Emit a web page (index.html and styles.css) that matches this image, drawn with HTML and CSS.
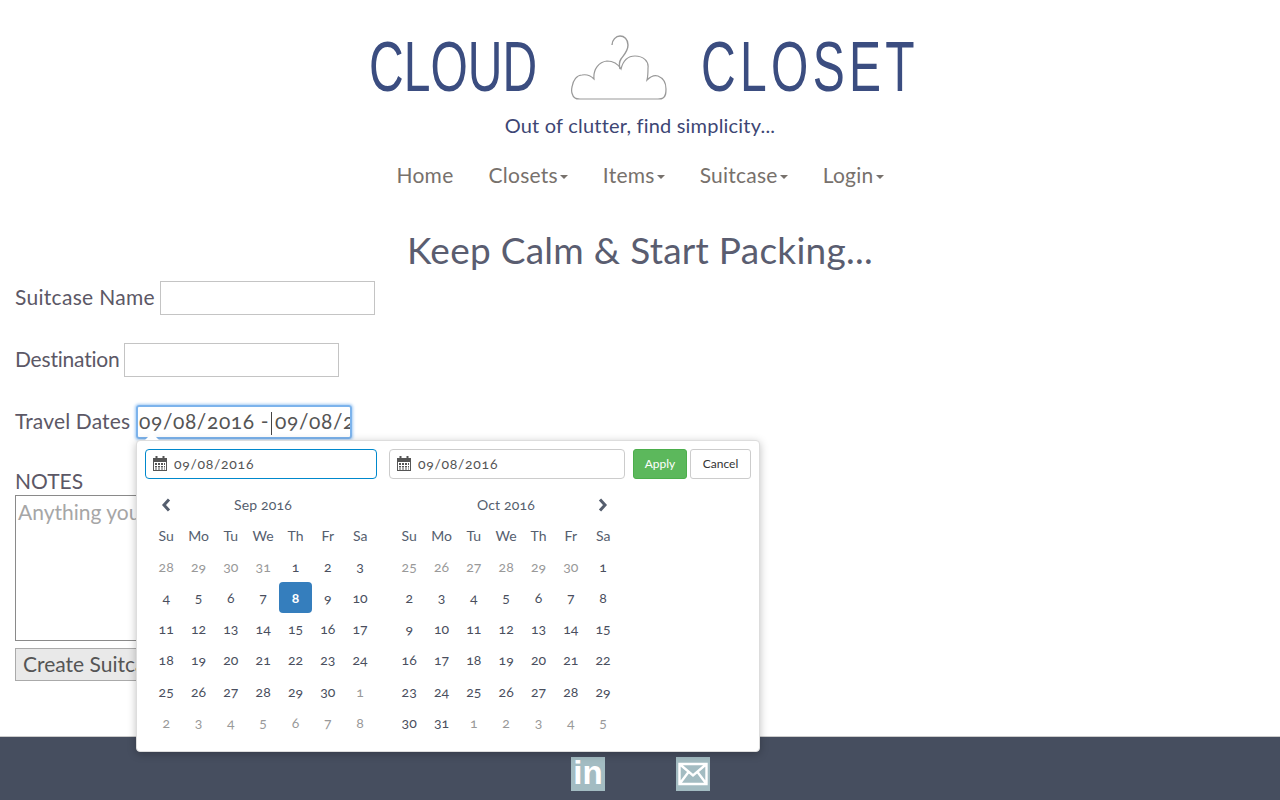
FILE: index.html
```html
<!DOCTYPE html>
<html>
<head>
    <link rel="stylesheet" href="styles.css">
</head>
<body>
    <header class="site-header">
        <div class="logo">
            <span class="logo-word cloud">CLOUD</span>
            <svg class="logo-icon" width="96" height="65" viewBox="-1 -1 96 65">
                <path d="M3 62 C0 60 -1 55 0 51 C1 44 5 39 10 39 C15 38 19 40 22 43 C21 33 27 26 35 25 C41 25 46 28 49 33 C51 25 56 20 63 20 C71 20 77 25 76 32 C76 36 76 40 75 44 C79 40 83 39 86 40 C91 42 94 47 94 53 C94 57 94 60 91 62 C90 63 88 63 86 63 L8 63 C6 63 4 63 3 62 Z" fill="#fff" stroke="#999" stroke-width="1.200"/>
                <path d="M48 33 C47 29 47 26 49 23 C52 19 56 15 56 9 C56 3 52 0 48 0 C44 0 40 4 40 9" fill="none" stroke="#999" stroke-width="1.400"/>
            </svg>
            <span class="logo-word closet">CLOSET</span>
        </div>
        <p class="tagline">Out of clutter, find simplicity...</p>
        <nav class="main-nav">
            <a href="#">Home</a>
            <a href="#">Closets<span class="caret"></span></a>
            <a href="#">Items<span class="caret"></span></a>
            <a href="#">Suitcase<span class="caret"></span></a>
            <a href="#">Login<span class="caret"></span></a>
        </nav>
    </header>

    <main class="packing">
        <h1>Keep Calm &amp; Start Packing...</h1>
        <form>
            <div class="field">
                <label class="label-name" for="suitcaseName">Suitcase Name</label>
                <input id="suitcaseName" type="text">
            </div>
            <div class="field">
                <label class="label-dest" for="destination">Destination</label>
                <input id="destination" type="text">
            </div>
            <div class="field dates">
                <label class="label-dates" for="travelDates">Travel Dates</label>
                <div class="dates-box">09/08/2016 -<span class="cursor"></span>09/08/2016</div>
                <div class="notch"></div>
            </div>
            <div class="notes">
                <label for="notes">NOTES</label>
                <textarea id="notes" placeholder="Anything you need to remember"></textarea>
            </div>
            <button class="create" type="button">Create Suitcase</button>
        </form>
    </main>

    <div class="picker">
        <div class="picker-top">
            <div class="date-input active">
                <svg class="cal-icon" width="14" height="15" viewBox="0 0 14 15"><path d="M0 2h2.500V0h2v2h5V0h2v2H14v13H0z M1 6v8h12V6z M2 7h2v2H2z M5 7h2v2H5z M8 7h2v2H8z M11 7h1v2h-1z M2 10h2v1.500H2z M5 10h2v1.500H5z M8 10h2v1.500H8z M11 10h1v1.500h-1z M2 12.500h2V13.500H2z M5 12.500h2V13.500H5z M8 12.500h2V13.500H8z M11 12.500h1V13.500h-1z" fill="#555" fill-rule="evenodd"/></svg>
                09/08/2016
            </div>
            <div class="date-input second">
                <svg class="cal-icon" width="14" height="15" viewBox="0 0 14 15"><path d="M0 2h2.500V0h2v2h5V0h2v2H14v13H0z M1 6v8h12V6z M2 7h2v2H2z M5 7h2v2H5z M8 7h2v2H8z M11 7h1v2h-1z M2 10h2v1.500H2z M5 10h2v1.500H5z M8 10h2v1.500H8z M11 10h1v1.500h-1z M2 12.500h2V13.500H2z M5 12.500h2V13.500H5z M8 12.500h2V13.500H8z M11 12.500h1V13.500h-1z" fill="#555" fill-rule="evenodd"/></svg>
                09/08/2016
            </div>
            <button class="btn apply" type="button">Apply</button>
            <button class="btn cancel" type="button">Cancel</button>
        </div>
        <div class="calendars">
            <div class="month" id="sep"></div>
            <div class="month" id="oct"></div>
        </div>
    </div>

    <footer class="site-footer">
        <a class="social in" href="#">in</a>
        <a class="social mail" href="#">
            <svg width="34" height="34" viewBox="0 0 34 34"><path d="M3.500 7h27v20h-27z M3.500 7l13.500 11.500L30.500 7 M3.500 27l9-12 M30.500 27l-9-12" fill="none" stroke="#fff" stroke-width="2.400"/></svg>
        </a>
    </footer>

    <script>
        const days = ["Su", "Mo", "Tu", "We", "Th", "Fr", "Sa"];

        function buildMonth(id, title, cells, first, last, arrow) {
            const box = document.getElementById(id);
            const head = document.createElement("div");
            head.className = "month-head";
            head.innerHTML = '<span class="arrow">' + (arrow === "left" ? '<svg width="10" height="14" viewBox="0 0 10 14"><path d="M8 1.500L3 7l5 5.500" fill="none" stroke="#555e6e" stroke-width="3"/></svg>' : "") + '</span>'
                + '<span class="month-name">' + title + '</span>'
                + '<span class="arrow">' + (arrow === "right" ? '<svg width="10" height="14" viewBox="0 0 10 14"><path d="M2 1.500L7 7l-5 5.500" fill="none" stroke="#555e6e" stroke-width="3"/></svg>' : "") + '</span>';
            box.appendChild(head);

            const grid = document.createElement("div");
            grid.className = "grid";
            days.forEach(function(d) {
                const cell = document.createElement("div");
                cell.className = "cell day-name";
                cell.textContent = d;
                grid.appendChild(cell);
            });
            cells.forEach(function(num, i) {
                const cell = document.createElement("div");
                cell.className = "cell";
                if (i < first || i > last) cell.className += " off";
                if (id === "sep" && i === 11) cell.className += " selected";
                cell.textContent = num;
                grid.appendChild(cell);
            });
            box.appendChild(grid);
        }

        function range(from, to) {
            const out = [];
            for (let i = from; i <= to; i++) out.push(i);
            return out;
        }

        buildMonth("sep", "Sep 2016", [28, 29, 30, 31].concat(range(1, 30), range(1, 8)), 4, 33, "left");
        buildMonth("oct", "Oct 2016", [25, 26, 27, 28, 29, 30].concat(range(1, 31), range(1, 5)), 6, 36, "right");
    </script>
</body>
</html>
```

FILE: styles.css
```css
* {
    box-sizing: border-box;
}
html, body {
    height: 100%;
}
body {
    margin: 0;
    height: 800px;
    overflow: hidden;
    position: relative;
    display: flex;
    flex-direction: column;
    font-family: "Lato", "Open Sans", sans-serif;
    font-variant-numeric: oldstyle-nums;
    color: #555;
    background: #fff;
}
.site-header {
    text-align: center;
}
.logo {
    height: 112px;
    padding: 24px 0 0 8px;
    display: flex;
    justify-content: center;
    align-items: center;
    gap: 34px;
}
.logo-word {
    font-family: "Liberation Sans", sans-serif;
    font-size: 48px;
    line-height: 70px;
    color: #3b4d80;
    transform: scaleY(1.45);
}
.closet {
    letter-spacing: 4.300px;
}
.logo-icon {
    display: block;
    margin-top: -1px;
}
.tagline {
    margin: 0;
    font-size: 20px;
    line-height: 26px;
    letter-spacing: 0.200px;
    color: #3d4674;
}
.main-nav {
    margin-top: 14px;
    height: 44px;
    display: flex;
    justify-content: center;
    align-items: center;
    gap: 35px;
}
.main-nav a {
    color: #77716c;
    font-size: 21px;
    letter-spacing: 0.250px;
    text-decoration: none;
}
.caret {
    display: inline-block;
    width: 0;
    height: 0;
    margin-left: 2px;
    vertical-align: middle;
    border-top: 4px solid #77716c;
    border-left: 4px solid transparent;
    border-right: 4px solid transparent;
}
.packing {
    flex: 1;
    padding: 0 15px;
}
h1 {
    margin: 30px 0 0;
    height: 55px;
    line-height: 47px;
    text-align: center;
    font-size: 37px;
    font-weight: 400;
    letter-spacing: 0.270px;
    color: #5a5d70;
}
.field {
    display: flex;
    align-items: center;
    gap: 5px;
    height: 34px;
    margin-bottom: 28px;
    font-size: 21px;
    color: #5c5866;
    position: relative;
}
.field label {
    padding-bottom: 3px;
    white-space: nowrap;
}
.label-name {
    width: 140px;
    letter-spacing: 0.300px;
}
.label-dest {
    width: 104px;
    letter-spacing: -0.200px;
}
.label-dates {
    width: 116px;
    letter-spacing: 0.150px;
}
.field input {
    width: 215px;
    height: 34px;
    border: 1px solid #c4c4c4;
    background: #fff;
    outline: 0;
}
.dates {
    margin-bottom: 0;
}
.dates-box {
    width: 216px;
    height: 34px;
    padding: 0 1px;
    font-size: 21px;
    line-height: 28px;
    letter-spacing: 0.600px;
    white-space: nowrap;
    overflow: hidden;
    color: #555;
    border: 2px solid #7cb3ec;
    border-radius: 3px;
    box-shadow: 0 0 3px 1px #a4cbf3;
}
.cursor {
    display: inline-block;
    width: 1px;
    height: 23px;
    margin: 0 3px 0 2px;
    vertical-align: middle;
    background: #444;
}
.notch {
    position: absolute;
    left: 130px;
    top: 28px;
    width: 0;
    height: 0;
    border-left: 7px solid transparent;
    border-right: 7px solid transparent;
    border-bottom: 7px solid #fff;
    z-index: 3;
}
.notes {
    margin-top: 29px;
}
.notes label {
    display: block;
    font-size: 21px;
    line-height: 26px;
    height: 27px;
    color: #5c5866;
}
textarea {
    display: block;
    width: 320px;
    height: 146px;
    padding: 3px 2px;
    margin: 0;
    border: 1px solid #8a8a8a;
    font-family: inherit;
    font-size: 21px;
    resize: none;
}
textarea::placeholder {
    color: #a6a6a6;
    opacity: 1;
}
.create {
    display: block;
    margin-top: 7px;
    width: 190px;
    height: 33px;
    padding: 0 7px 3px;
    text-align: left;
    white-space: nowrap;
    overflow: hidden;
    font-family: inherit;
    font-size: 21px;
    color: #555;
    background: #e9e9e9;
    border: 1px solid #aaa;
}
.picker {
    position: absolute;
    left: 136px;
    top: 440px;
    width: 624px;
    height: 312px;
    padding: 8px;
    background: #fff;
    border: 1px solid #ddd;
    border-radius: 4px;
    box-shadow: 0 2px 8px rgba(0, 0, 0, 0.25);
    z-index: 2;
    color: #555e6e;
}
.picker-top {
    display: flex;
    align-items: center;
    height: 30px;
}
.date-input {
    width: 232px;
    height: 30px;
    padding: 0 0 1px 7px;
    display: flex;
    align-items: center;
    gap: 7px;
    font-size: 14px;
    letter-spacing: 0.700px;
    color: #555;
    border: 1px solid #ccc;
    border-radius: 4px;
}
.date-input.active {
    border-color: #08c;
}
.date-input.second {
    width: 236px;
    margin-left: 12px;
}
.cal-icon {
    display: block;
}
.btn {
    height: 30px;
    padding: 0 0 1px;
    font-family: inherit;
    font-size: 12px;
    border-radius: 3px;
}
.apply {
    width: 54px;
    margin-left: 8px;
    color: #fff;
    background: #5cb85c;
    border: 1px solid #4cae4c;
}
.cancel {
    width: 61px;
    margin-left: 3px;
    color: #333;
    background: #fff;
    border: 1px solid #ccc;
}
.calendars {
    display: flex;
    gap: 17px;
    margin-top: 10px;
    padding-left: 5px;
}
.month {
    width: 226px;
}
.month-head {
    display: flex;
    align-items: center;
    justify-content: space-between;
    height: 31px;
    padding: 0 11px;
    font-size: 14px;
    letter-spacing: 0.200px;
}
.arrow {
    width: 10px;
    height: 14px;
}
.arrow svg {
    display: block;
}
.month-name {
    flex: 1;
    text-align: center;
}
.grid {
    display: grid;
    grid-template-columns: repeat(7, 32.330px);
    grid-auto-rows: 31.100px;
}
.cell {
    display: flex;
    align-items: center;
    justify-content: center;
    font-size: 14px;
    color: #4a4f5e;
    border-radius: 4px;
}
.day-name {
    color: #555e6e;
}
.off {
    color: #999;
}
.selected {
    background: #357ebd;
    color: #fff;
    font-weight: 700;
}
.site-footer {
    height: 64px;
    flex-shrink: 0;
    display: flex;
    justify-content: center;
    padding: 20px 0 0 1px;
    gap: 71px;
    background: #464e5f;
    border-top: 1px solid #ccc;
}
.social {
    display: block;
    width: 34px;
    height: 34px;
    background: #a3bcc2;
    text-decoration: none;
}
.social.in {
    color: #fff;
    font-family: "Liberation Sans", sans-serif;
    font-weight: 700;
    font-size: 33px;
    line-height: 32px;
    text-align: center;
}
.social svg {
    display: block;
}
```
